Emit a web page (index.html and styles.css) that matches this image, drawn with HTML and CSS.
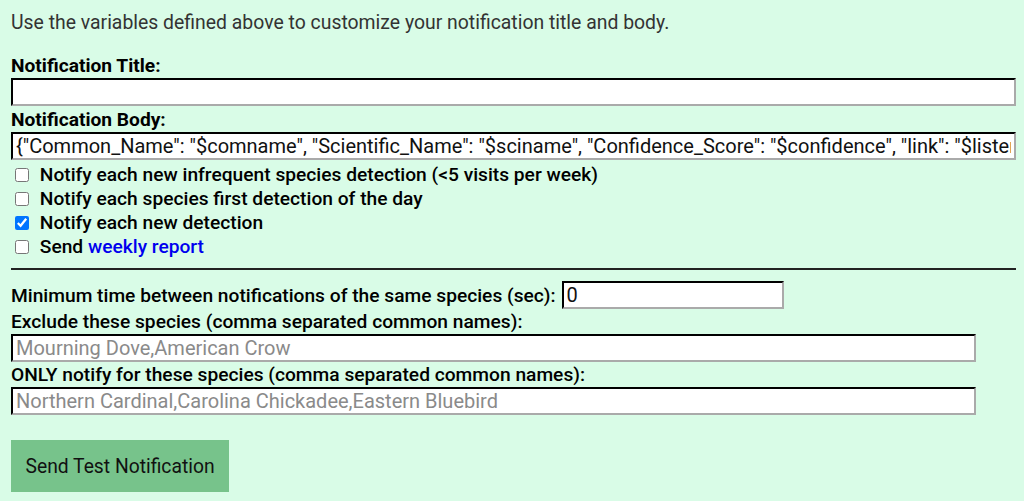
FILE: index.html
```html
<!DOCTYPE html>
<html lang="en">
<head>
    <meta charset="UTF-8">
    <meta name="viewport" content="width=device-width, initial-scale=1.0">
    <title>Notification Settings</title>
    <link rel="stylesheet" href="styles.css">
</head>
<body>
    <div class="settings">
        <p class="intro">Use the variables defined above to customize your notification title and body.</p>

        <label class="field-title" for="notif-title">Notification Title:</label>
        <input class="text-input full" type="text" id="notif-title">

        <label class="field-title" for="notif-body">Notification Body:</label>
        <input class="text-input full" type="text" id="notif-body" value='{"Common_Name": "$comname", "Scientific_Name": "$sciname", "Confidence_Score": "$confidence", "link": "$listenurl"}'>

        <div class="checks">
            <label class="check-row"><input type="checkbox"> Notify each new infrequent species detection (&lt;5 visits per week)</label>
            <label class="check-row"><input type="checkbox"> Notify each species first detection of the day</label>
            <label class="check-row"><input type="checkbox" checked> Notify each new detection</label>
            <label class="check-row"><input type="checkbox"> Send <a href="#">weekly report</a></label>
        </div>

        <hr class="divider">

        <div class="inline-row">
            <label for="cooldown">Minimum time between notifications of the same species (sec):</label>
            <input class="text-input short" type="text" id="cooldown" value="0">
        </div>

        <label class="plain-label" for="exclude">Exclude these species (comma separated common names):</label>
        <input class="text-input wide" type="text" id="exclude" placeholder="Mourning Dove,American Crow">

        <label class="plain-label" for="only">ONLY notify for these species (comma separated common names):</label>
        <input class="text-input wide" type="text" id="only" placeholder="Northern Cardinal,Carolina Chickadee,Eastern Bluebird">

        <button class="test-btn" type="button">Send Test Notification</button>
    </div>
</body>
</html>
```

FILE: styles.css
```css
/* Page */
body {
    margin: 0;
    background-color: #d9fce7;
    font-family: Roboto, "Liberation Sans", sans-serif;
    color: #000;
}

.settings {
    padding: 0 8px 0 11px;
    display: flex;
    flex-direction: column;
    align-items: flex-start;
}

.intro {
    margin: 12px 0 21px;
    font-size: 19.4px;
    line-height: 22px;
    color: #333;
}

/* Labels */
.field-title {
    font-size: 19.2px;
    font-weight: 700;
    line-height: 22px;
    margin-bottom: 1px;
}

.plain-label {
    font-size: 19.2px;
    font-weight: 500;
    line-height: 22px;
    margin-top: 2px;
    margin-bottom: 1px;
}

/* Inputs */
.text-input {
    box-sizing: border-box;
    height: 28px;
    margin: 0;
    padding: 0 3px;
    font-family: Roboto, "Liberation Sans", sans-serif;
    font-size: 20px;
    color: #111;
    background: #fff;
    border: 2px inset #767676;
    border-color: #444 #aaa #aaa #444;
}

.text-input::placeholder {
    color: #8a8a8a;
}

.full {
    width: 1005px;
    margin-bottom: 3px;
}

.wide {
    width: 965px;
}

.short {
    width: 222px;
}

/* Checkboxes */
.checks {
    display: flex;
    flex-direction: column;
}

.check-row {
    font-size: 19.2px;
    font-weight: 500;
    line-height: 24px;
    display: flex;
    align-items: center;
    white-space: pre;
}

.check-row input {
    width: 14px;
    height: 14px;
    margin: 0 6px 0 4px;
}

.check-row a {
    color: #0000ee;
    text-decoration: none;
}

.divider {
    align-self: stretch;
    margin: 9px 0 11px;
    border: 0;
    border-top: 2px solid #222;
}

.inline-row {
    display: flex;
    align-items: center;
    gap: 6px;
    font-size: 19.2px;
    font-weight: 500;
}

/* Button */
.test-btn {
    margin-top: 25px;
    width: 218px;
    height: 52px;
    background-color: #77c38b;
    border: none;
    font-family: Roboto, "Liberation Sans", sans-serif;
    font-size: 19.3px;
    color: #111;
    cursor: pointer;
}
```
